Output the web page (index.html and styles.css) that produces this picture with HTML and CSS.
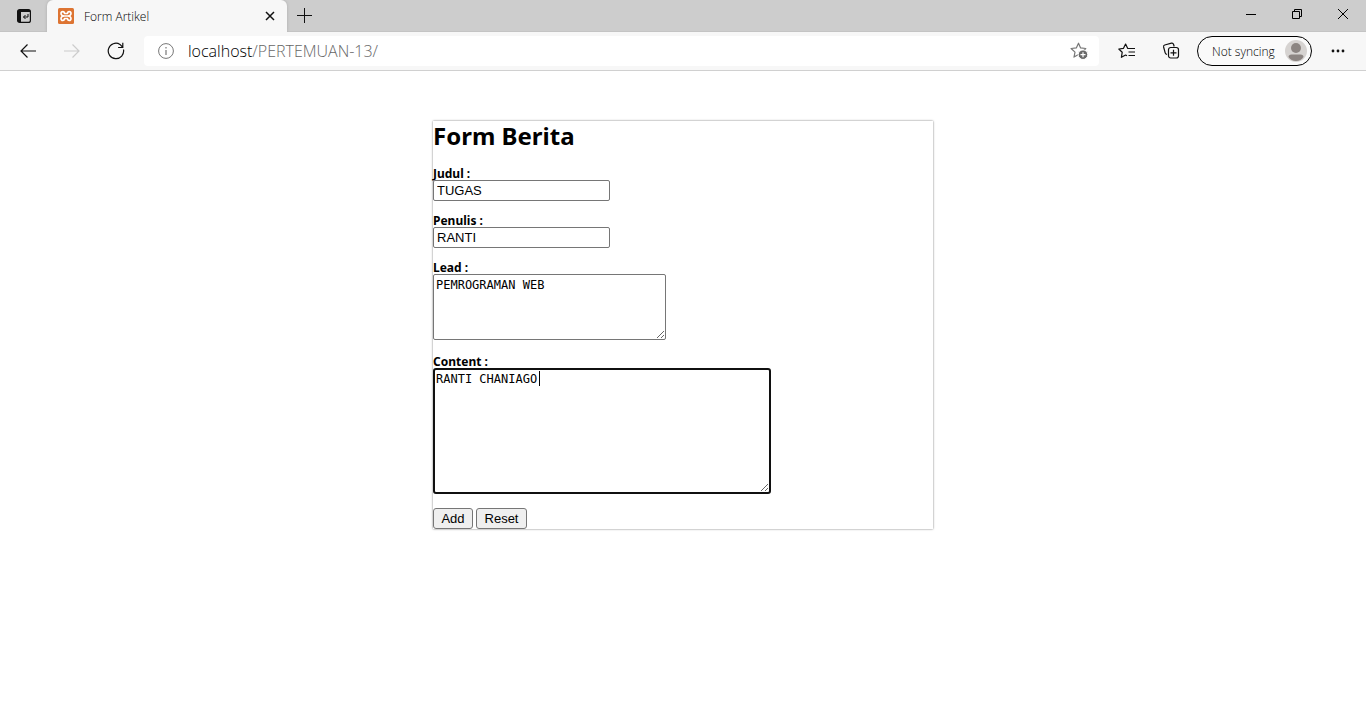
FILE: index.html
```html
<!DOCTYPE html>
<html lang="id">
<head>
<meta charset="utf-8">
<title>Form Artikel</title>
<link rel="stylesheet" href="styles.css">
</head>
<body>
<header class="browser">
  <div class="tabstrip">
    <button class="icon-btn tab-actions" aria-label="Tab actions">
      <svg width="14" height="14" viewBox="0 0 14 14" fill="none" stroke="#111"><rect x=".6" y=".6" width="12.800" height="12.800" rx="2" stroke-width="1.200"/><path d="M1 1h12v2H4v10H1z" fill="#111" stroke="none"/><path d="M11 5v3H6.500M8.500 6L6.500 8l2 2"/></svg>
    </button>
    <div class="tab">
      <svg width="16" height="16" viewBox="0 0 16 16"><rect width="16" height="16" rx="1.500" fill="#dd7432"/><path d="M6.200 8H9.800M6.200 8Q3 7.800 3 5.600 3 3.600 4.800 3.600 6.500 3.600 6.500 5.500H9.500Q9.500 3.600 11.200 3.600 13 3.600 13 5.600 13 7.800 9.800 8 13 8.200 13 10.400 13 12.400 11.200 12.400 9.500 12.400 9.500 10.500H6.500Q6.500 12.400 4.800 12.400 3 12.400 3 10.400 3 8.200 6.200 8z" fill="none" stroke="#fff" stroke-width="1.600" stroke-linejoin="round"/></svg>
      <span class="tab-title">Form Artikel</span>
      <button class="icon-btn" aria-label="Close tab"><svg width="10" height="10" viewBox="0 0 10 10" stroke="#111" stroke-width="1.500"><path d="M1 1l8 8M9 1L1 9"/></svg></button>
    </div>
    <button class="icon-btn new-tab" aria-label="New tab"><svg width="15" height="15" viewBox="0 0 15 15" stroke="#111"><path d="M7.500 0v15M0 7.500h15"/></svg></button>
    <div class="window-controls">
      <button class="icon-btn" aria-label="Minimize"><svg width="10" height="10" viewBox="0 0 10 10" stroke="#000"><path d="M0 5.500h10"/></svg></button>
      <button class="icon-btn" aria-label="Restore"><svg width="10" height="10" viewBox="0 0 10 10" fill="none" stroke="#000"><path d="M.5 2.500h7v7h-7zM2.500 2.500v-2h7v7h-2"/></svg></button>
      <button class="icon-btn" aria-label="Close"><svg width="10" height="10" viewBox="0 0 10 10" stroke="#000"><path d="M0 0l10 10M10 0L0 10"/></svg></button>
    </div>
  </div>
  <div class="toolbar">
    <nav class="nav">
      <button class="icon-btn" aria-label="Back"><svg width="16" height="14" viewBox="0 0 16 14" fill="none" stroke="#111" stroke-width="1.200"><path d="M16 7H1M7.500.5L1 7l6.500 6.500"/></svg></button>
      <button class="icon-btn" aria-label="Forward" disabled><svg width="16" height="14" viewBox="0 0 16 14" fill="none" stroke="#ccc" stroke-width="1.200"><path d="M0 7h15M8.500.5L15 7l-6.500 6.500"/></svg></button>
      <button class="icon-btn" aria-label="Refresh"><svg width="18" height="18" viewBox="0 0 18 18" fill="none" stroke="#111" stroke-width="1.200"><path d="M16.500 7.500A7.700 7.700 0 1 1 13 2.400L15.500 5M15.800.8v4.700h-4.700"/></svg></button>
    </nav>
    <div class="address">
      <svg width="16" height="16" viewBox="0 0 16 16" fill="none" stroke="#777"><circle cx="8" cy="8" r="7.400"/><path d="M8 7v5M8 4v1.500" stroke-width="1.200"/></svg>
      <span class="url">localhost<span class="url-path">/PERTEMUAN-13/</span></span>
      <button class="icon-btn" aria-label="Add to favorites"><svg width="18" height="18" viewBox="0 0 18 18" fill="none" stroke="#777"><path d="M8.500 1.200l2.100 4.700 5.200.6-3.900 3.600 1 5-4.400-2.500L4 15.100l1-5-3.900-3.600 5.200-.6z" stroke-width="1.200" stroke-linejoin="round"/><circle cx="13" cy="12.700" r="4.800" fill="#696969" stroke="#fff"/><path d="M13 10.200v5M10.500 12.700h5" stroke="#fff" stroke-width="1.200"/></svg></button>
    </div>
    <div class="actions">
      <button class="icon-btn" aria-label="Favorites"><svg width="18" height="16" viewBox="0 0 18 16" fill="none" stroke="#111" stroke-width="1.200" stroke-linejoin="round"><path d="M11 5.500l-1.400-.2L7.600 1 5.500 5.300l-4.700.7 3.400 3.300-.8 5 4.200-2.300 1.400.8M10.500 5.500H17M10.500 9H17M10.500 12.500H17"/></svg></button>
      <button class="icon-btn" aria-label="Collections"><svg width="18" height="18" viewBox="0 0 18 18" fill="none" stroke="#111" stroke-width="1.200"><path d="M5 12.500Q3.500 12 3.200 10.800L1.600 5Q1.200 3.400 2.700 3L9.500 1.200Q11 .9 11.500 2.300L12.200 4.500"/><rect x="6.500" y="5.500" width="10" height="10.500" rx="2.200" fill="#f7f7f7"/><path d="M11.500 7.800v6M8.500 10.800h6"/></svg></button>
      <button class="profile">Not syncing
        <svg width="22" height="22" viewBox="0 0 22 22"><circle cx="11" cy="11" r="11" fill="#d6d3d1"/><circle cx="11" cy="8" r="5" fill="#8c8582"/><path d="M3.500 17q0-2.500 3-2.500h9q3 0 3 2.500-2.500 4-7.500 4t-7.500-4z" fill="#8c8582"/></svg>
      </button>
      <button class="icon-btn" aria-label="Settings and more"><svg width="14" height="4" viewBox="0 0 14 4" fill="#111"><circle cx="2" cy="2" r="1.400"/><circle cx="7" cy="2" r="1.400"/><circle cx="12" cy="2" r="1.400"/></svg></button>
    </div>
  </div>
</header>
<main class="page">
  <form class="article-form">
    <h1 class="form-title">Form Berita</h1>
    <div class="field"><label for="judul">Judul :</label><input class="text-input" id="judul" type="text" value="TUGAS"></div>
    <div class="field"><label for="penulis">Penulis :</label><input class="text-input" id="penulis" type="text" value="RANTI"></div>
    <div class="field field-area"><label for="lead">Lead :</label><textarea class="area lead" id="lead">PEMROGRAMAN WEB</textarea></div>
    <div class="field field-area field-active"><label for="content">Content :</label><textarea class="area content" id="content">RANTI CHANIAGO</textarea></div>
    <div class="buttons"><button class="form-btn btn-add" type="button">Add</button><button class="form-btn btn-reset" type="reset">Reset</button></div>
  </form>
</main>
</body>
</html>
```
FILE: styles.css
```css
* { box-sizing: border-box; }
body { margin: 0; background: #fff; color: #000; font-family: "Noto Sans", "Open Sans", sans-serif; }
svg { display: block; flex: none; }
.icon-btn { display: flex; align-items: center; justify-content: center; flex: none; padding: 0; border: 0; background: none; }

.browser { background: #f7f7f7; border-bottom: 1px solid #d0d0d0; }
.tabstrip { display: flex; height: 32px; background: #cdcdcd; border-bottom: 1px solid #c4c4c4; }
.tab-actions { width: 47px; }
.tab { display: flex; align-items: center; gap: 10px; width: 240px; height: 32px; padding: 0 12px 0 11px; border-radius: 6px 6px 0 0; background: #f7f7f7; box-shadow: 0 0 3px #aaa; clip-path: inset(-3px -3px 0 -3px); }
.tab-title { flex: 1; font: 300 12px "Open Sans", sans-serif; }
.new-tab { width: 35px; }
.window-controls { display: flex; margin-left: auto; padding-bottom: 4px; }
.window-controls .icon-btn { width: 46px; }

.toolbar { display: flex; align-items: center; height: 38px; }
.nav { display: flex; padding-left: 6px; }
.nav .icon-btn { width: 44px; }
.address { display: flex; flex: 1; align-items: center; gap: 14px; height: 30px; margin-left: 6px; padding: 0 11px 0 14px; border-radius: 4px; background: #fff; }
.url { flex: 1; font: 300 16px "Open Sans", sans-serif; }
.url-path { color: #666; }
.actions { display: flex; align-items: center; padding-left: 6px; padding-right: 6px; }
.actions .icon-btn { width: 44px; }
.actions .icon-btn:last-child { margin-left: 4px; }
.profile { display: flex; align-items: center; justify-content: space-between; gap: 8px; height: 30px; width: 115px; margin-left: 4px; padding: 0 4px 0 14px; border: 1px solid #000; border-radius: 15px; background: #fafafa; color: #000; font: 300 12px "Open Sans", sans-serif; white-space: nowrap; }

.page { padding: 50px 0; }
.article-form { max-width: 500px; margin: 0 auto; box-shadow: 0 0 2px #777; }
.form-title { margin: 0 0 17px; font-size: 24px; line-height: 30px; }
.field { display: flex; flex-direction: column; align-items: flex-start; margin-bottom: 14px; }
.field-area { margin-bottom: 16px; }
.field-active { position: relative; margin-bottom: 14px; }
.field-active::after { content: ""; position: absolute; top: 15px; left: 106px; width: 1px; height: 15px; background: #000; }
.field label { font-size: 12px; font-weight: bold; line-height: 12px; }
.text-input { width: 177px; height: 21px; padding: 1px 3px; border: 1px solid #767676; border-radius: 2px; font: 13px "Liberation Sans", sans-serif; }
.area { padding: 2px; border: 1px solid #767676; border-radius: 2px; font: 12px/17px "DejaVu Sans Mono", monospace; }
.lead { width: 233px; height: 66px; }
.content { width: 338px; height: 126px; border: 2px solid #101010; border-radius: 3px; outline: 0; padding: 1px; }
.buttons { display: flex; gap: 3px; }
.form-btn { height: 21px; padding: 1px 6px; border: 1px solid #767676; border-radius: 3px; background: #efefef; color: #000; font: 13px "Liberation Sans", sans-serif; }
.btn-add { width: 40px; }
.btn-reset { width: 51px; }
```
